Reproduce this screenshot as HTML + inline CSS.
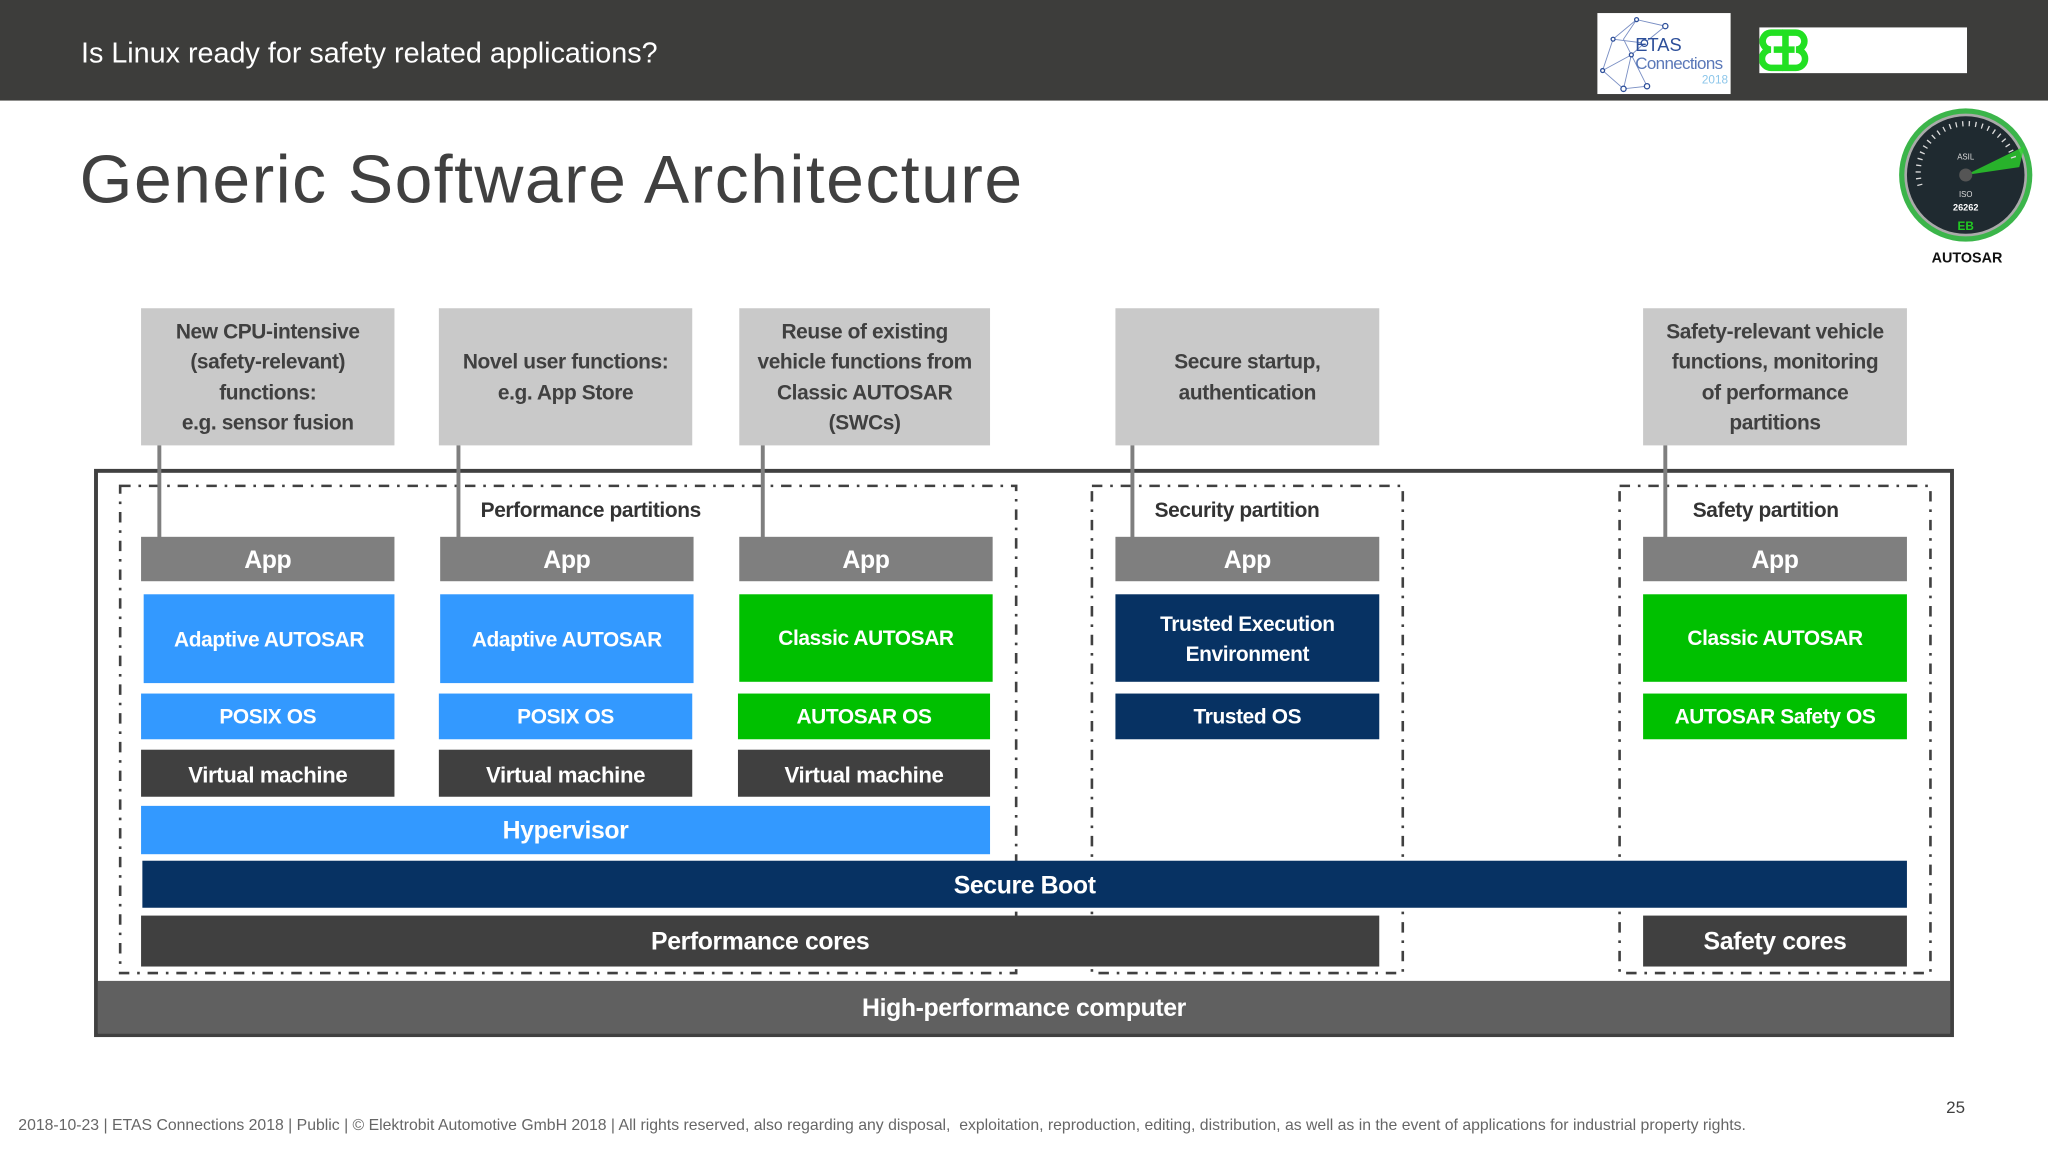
<!DOCTYPE html>
<html><head><meta charset="utf-8"><style>
html,body{margin:0;padding:0;width:2048px;height:1152px;overflow:hidden;background:#fff}
#w{position:absolute;left:0;top:0;width:1568px;height:882px;transform:scale(1.306122);transform-origin:0 0;font-family:"Liberation Sans",sans-serif}
.b{position:absolute;display:flex;align-items:center;justify-content:center;text-align:center;color:#fff;font-weight:bold;font-size:16px;line-height:23px;letter-spacing:-0.3px;padding-top:2px;box-sizing:border-box}
.g{background:#7f7f7f;font-size:19px}
.top{background:#c9c9c9;color:#404040;font-size:16px;line-height:23.5px}
.bl{background:#3399ff}.nv{background:#073263}.gr{background:#00c000}.dk{background:#404040}
.lbl{position:absolute;color:#333;font-weight:bold;font-size:16px;letter-spacing:-0.3px}
</style></head><body><div id="w">
<div style="position:absolute;left:0;top:0;width:1568px;height:77px;background:#3d3d3b"></div>
<div style="position:absolute;left:62px;top:28px;color:#fff;font-size:22px">Is Linux ready for safety related applications?</div>
<div style="position:absolute;left:1223px;top:10px;width:102px;height:62px;background:#fff;overflow:hidden">
<svg width="102" height="62" style="position:absolute;left:0;top:0"><g stroke="#7a8fc4" stroke-width="0.7" fill="none"><path d="M30 5 L12 20 L4 44 L20 58 L38 56 L20 20 L30 5 L52 10 L36 23 L12 20 M4 44 L26 32 L36 23 M26 32 L20 58 M26 32 L38 56"/></g><g fill="#fff" stroke="#2d4f9a" stroke-width="1"><circle cx="36" cy="23" r="2.5"/><circle cx="52" cy="10" r="2"/><circle cx="20" cy="58" r="2"/><circle cx="38" cy="56" r="2"/><circle cx="30" cy="5" r="1.5"/><circle cx="12" cy="20" r="1.5"/><circle cx="4" cy="44" r="1.5"/><circle cx="26" cy="32" r="1.5"/></g></svg>
<div style="position:absolute;left:29px;top:17px;color:#2d4f9a;font-size:14px;line-height:14px">ETAS</div>
<div style="position:absolute;left:29px;top:32px;color:#5a78b8;font-size:13px;line-height:14px;letter-spacing:-0.5px">Connections</div>
<div style="position:absolute;left:80px;top:46px;color:#8cc6ea;font-size:9px">2018</div></div>
<div style="position:absolute;left:1347px;top:21px;width:159px;height:35px;background:#fff">
<svg width="40" height="35" style="position:absolute;left:0;top:0"><g fill="none" stroke="#22e022" stroke-width="5"><path d="M18 4 H9 A6.5 6.5 0 0 0 9 17 A6.5 6.5 0 0 0 9 31 H18 M18 17 H11"/><path d="M20 4 H28 A6.5 6.5 0 0 1 28 17 A6.5 6.5 0 0 1 28 31 H20 Z M20 17 H27"/></g></svg></div>
<svg style="position:absolute;left:1452px;top:82px" width="108" height="125">
<circle cx="53" cy="52" r="51" fill="#3bb54a"/><circle cx="53" cy="52" r="47" fill="#aaa"/><circle cx="53" cy="52" r="45" fill="#1f2a30"/>
<path d="M53 52 L98 30 L94 46 Z" fill="#2bd42b" opacity="0.8"/>
<circle cx="53" cy="52" r="5" fill="#555"/>
<path d="M18 60 A36 36 0 0 1 90 40" stroke="#ddd" stroke-width="4" fill="none" stroke-dasharray="1 4"/>
<text x="53" y="40" fill="#ddd" font-size="6" text-anchor="middle" font-family="Liberation Sans">ASIL</text>
<text x="53" y="69" fill="#ddd" font-size="6" text-anchor="middle" font-family="Liberation Sans">ISO</text>
<text x="53" y="79" fill="#fff" font-size="7" font-weight="bold" text-anchor="middle" font-family="Liberation Sans">26262</text>
<text x="53" y="94" fill="#2c2" font-size="9" font-weight="bold" text-anchor="middle" font-family="Liberation Sans">EB</text>
<text x="54" y="119" fill="#111" font-size="11" font-weight="900" text-anchor="middle" font-family="Liberation Sans">AUTOSAR</text></svg>
<div style="position:absolute;left:61px;top:108px;color:#404040;font-size:52px;letter-spacing:1.1px">Generic Software Architecture</div>

<div class="b top" style="left:108px;top:236px;width:194px;height:105px">New CPU-intensive<br>(safety-relevant)<br>functions:<br>e.g. sensor fusion</div>
<div class="b top" style="left:336px;top:236px;width:194px;height:105px">Novel user functions:<br>e.g. App Store</div>
<div class="b top" style="left:566px;top:236px;width:192px;height:105px">Reuse of existing<br>vehicle functions from<br>Classic AUTOSAR<br>(SWCs)</div>
<div class="b top" style="left:854px;top:236px;width:202px;height:105px">Secure startup,<br>authentication</div>
<div class="b top" style="left:1258px;top:236px;width:202px;height:105px">Safety-relevant vehicle<br>functions, monitoring<br>of performance<br>partitions</div>

<div style="position:absolute;left:72px;top:359px;width:1418px;height:429px;border:3px solid #404040"></div>
<div class="b" style="left:75px;top:751px;width:1418px;height:40px;background:#606060;font-size:19px">High-performance computer</div>

<svg style="position:absolute;left:0;top:0" width="1568" height="882"><g fill="none" stroke="#404040" stroke-width="2" stroke-dasharray="8 6 2 6">
<rect x="92" y="372" width="686" height="373"/><rect x="836" y="372" width="238" height="373"/><rect x="1240" y="372" width="238" height="373"/></g>
<g stroke="#7f7f7f" stroke-width="3"><path d="M122 341V412M351 341V412M584 341V412M867 341V412M1275 341V412"/></g></svg>

<div class="lbl" style="left:368px;top:383px">Performance partitions</div>
<div class="lbl" style="left:884px;top:383px">Security partition</div>
<div class="lbl" style="left:1296px;top:383px">Safety partition</div>

<div class="b g" style="left:108px;top:411px;width:194px;height:34px">App</div>
<div class="b g" style="left:337px;top:411px;width:194px;height:34px">App</div>
<div class="b g" style="left:566px;top:411px;width:194px;height:34px">App</div>
<div class="b g" style="left:854px;top:411px;width:202px;height:34px">App</div>
<div class="b g" style="left:1258px;top:411px;width:202px;height:34px">App</div>

<div class="b bl" style="left:110px;top:455px;width:192px;height:68px">Adaptive AUTOSAR</div>
<div class="b bl" style="left:337px;top:455px;width:194px;height:68px">Adaptive AUTOSAR</div>
<div class="b gr" style="left:566px;top:455px;width:194px;height:67px">Classic AUTOSAR</div>
<div class="b nv" style="left:854px;top:455px;width:202px;height:67px">Trusted Execution<br>Environment</div>
<div class="b gr" style="left:1258px;top:455px;width:202px;height:67px">Classic AUTOSAR</div>

<div class="b bl" style="left:108px;top:531px;width:194px;height:35px">POSIX OS</div>
<div class="b bl" style="left:336px;top:531px;width:194px;height:35px">POSIX OS</div>
<div class="b gr" style="left:565px;top:531px;width:193px;height:35px">AUTOSAR OS</div>
<div class="b nv" style="left:854px;top:531px;width:202px;height:35px">Trusted OS</div>
<div class="b gr" style="left:1258px;top:531px;width:202px;height:35px">AUTOSAR Safety OS</div>

<div class="b dk" style="left:108px;top:574px;width:194px;height:36px;font-size:17px">Virtual machine</div>
<div class="b dk" style="left:336px;top:574px;width:194px;height:36px;font-size:17px">Virtual machine</div>
<div class="b dk" style="left:565px;top:574px;width:193px;height:36px;font-size:17px">Virtual machine</div>

<div class="b bl" style="left:108px;top:617px;width:650px;height:37px;font-size:19px">Hypervisor</div>
<div class="b nv" style="left:109px;top:659px;width:1351px;height:36px;font-size:19px">Secure Boot</div>
<div class="b dk" style="left:108px;top:701px;width:948px;height:39px;font-size:19px">Performance cores</div>
<div class="b dk" style="left:1258px;top:701px;width:202px;height:39px;font-size:19px">Safety cores</div>

<div style="position:absolute;left:14px;top:854px;color:#666;font-size:12.1px;white-space:nowrap">2018-10-23 | ETAS Connections 2018 | Public | © Elektrobit Automotive GmbH 2018 | All rights reserved, also regarding any disposal,&nbsp; exploitation, reproduction, editing, distribution, as well as in the event of applications for industrial property rights.</div>
<div style="position:absolute;left:1490px;top:840px;color:#404040;font-size:13px">25</div>
</div></body></html>
